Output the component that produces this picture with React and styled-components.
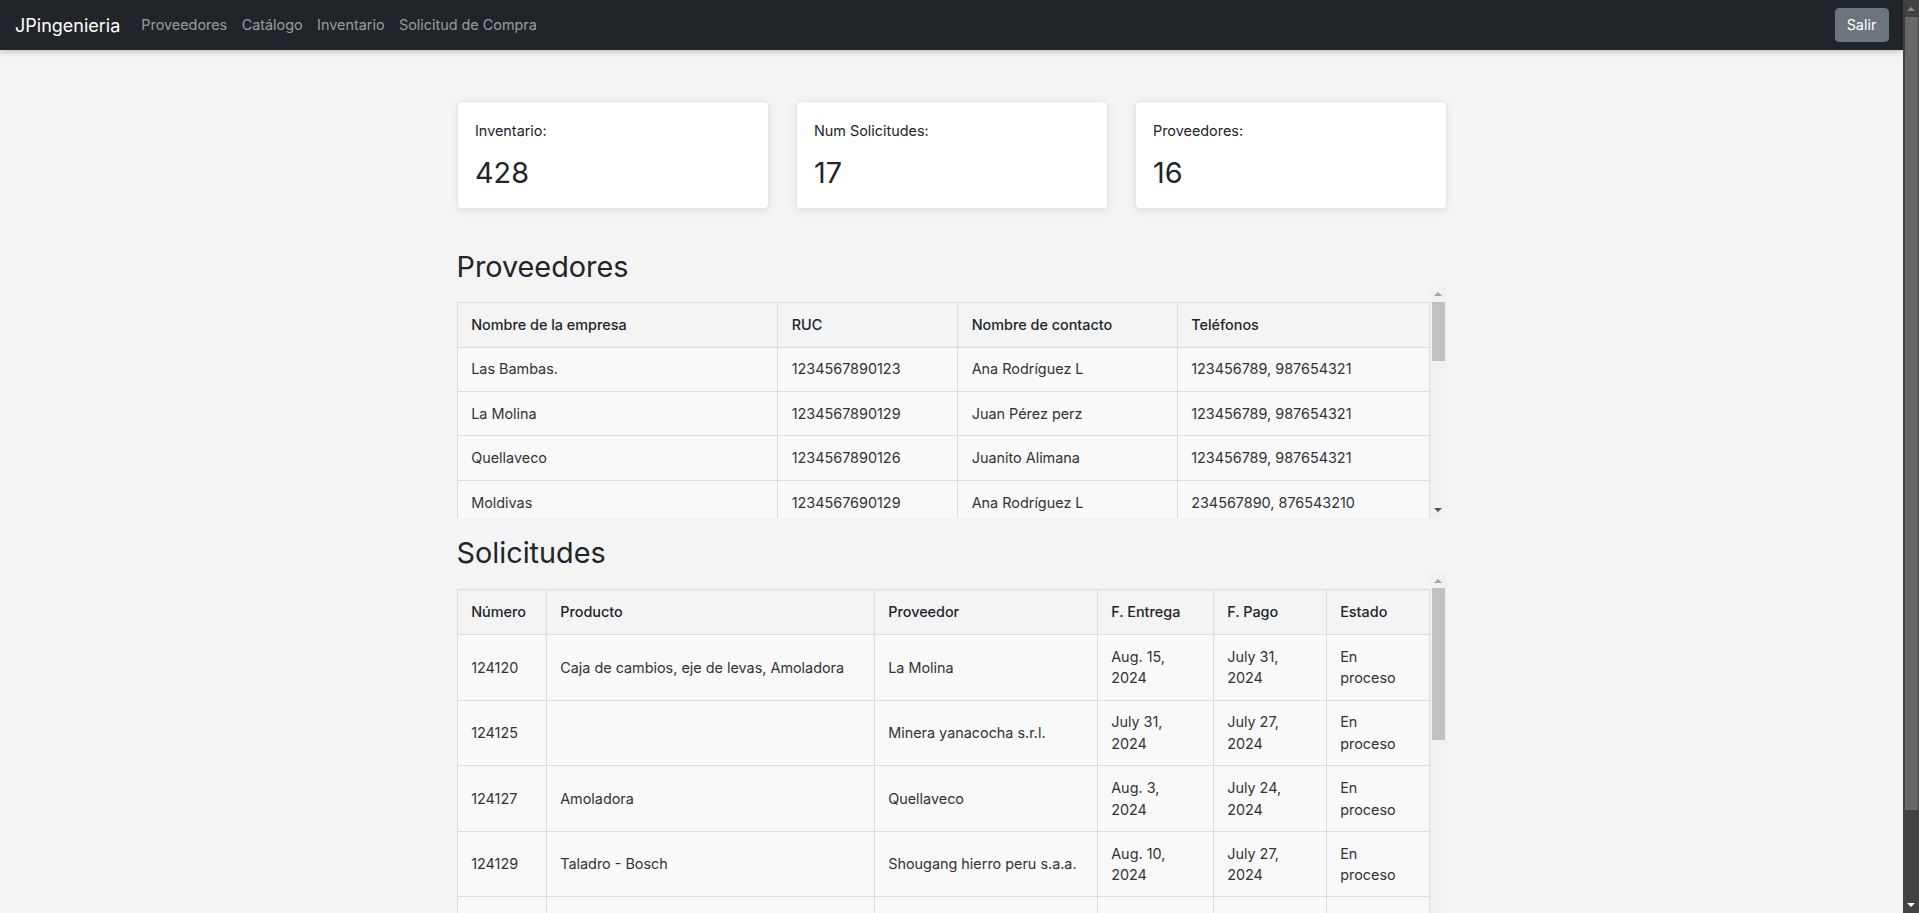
import React from "react";
import styled, { createGlobalStyle } from "styled-components";

const GlobalStyle = createGlobalStyle`
  body {
    margin: 0;
    background: #f4f4f4;
    color: #212529;
    font-family: Inter, "Noto Sans", sans-serif;
    font-size: 14.4px;
    line-height: 1.5;
  }
`;

const Shell = styled.div`
  display: flex;
  height: 100vh;
  overflow: hidden;
`;

const Page = styled.div`
  flex: 1;
  min-width: 0;
  display: flex;
  flex-direction: column;
`;

const Navbar = styled.nav`
  flex: none;
  display: flex;
  align-items: center;
  height: 50px;
  padding: 0 14.5px 0 15px;
  background: #212529;
  box-shadow: 0 2px 6px rgba(0, 0, 0, 0.2);
  position: relative;
`;

const Brand = styled.a`
  color: #fff;
  font-size: 18px;
  margin-right: 21px;
`;

const NavLinks = styled.div`
  display: flex;
  gap: 14.4px;
  flex: 1;
`;

const NavLink = styled.a`
  color: rgba(255, 255, 255, 0.55);
`;

const LogoutButton = styled.button`
  width: 54px;
  height: 34px;
  background: #6c757d;
  border: 1px solid #6c757d;
  border-radius: 4px;
  color: #fff;
  font: inherit;
  padding: 0;
`;

const Main = styled.main`
  flex: 1;
  min-height: 0;
  width: 990px;
  margin: 0 auto;
  padding-top: 51px;
  display: flex;
  flex-direction: column;
`;

const Cards = styled.section`
  flex: none;
  display: grid;
  grid-template-columns: repeat(3, 1fr);
  gap: 27px;
  margin-bottom: 41.2px;
`;

const Card = styled.div`
  height: 107.5px;
  box-sizing: border-box;
  padding: 18px 17.5px;
  background: #fff;
  border: 1px solid #e4e4e4;
  border-radius: 4px;
  box-shadow: 0 2px 8px rgba(0, 0, 0, 0.08);
`;

const CardLabel = styled.p`
  margin: 0 0 14.5px;
`;

const CardValue = styled.p`
  margin: 0;
  font-size: 28.8px;
  line-height: 34px;
`;

const Heading = styled.h2`
  flex: none;
  margin: 0 0 2.4px;
  font-size: 28.8px;
  font-weight: 400;
  line-height: 1.2;
`;

const Scroller = styled.div`
  display: flex;
  min-height: 0;
  flex: ${(p) => (p.$height ? `0 0 ${p.$height}px` : "1")};
  margin-bottom: ${(p) => p.$after || 0}px;
`;

const TableViewport = styled.div`
  flex: 1;
  min-width: 0;
  overflow: hidden;
  padding-top: ${(p) => p.$top}px;
`;

const Rail = styled.div`
  flex: none;
  width: ${(p) => (p.$dark ? 16 : 17)}px;
  display: flex;
  flex-direction: column;
  background: ${(p) => (p.$dark ? "#424242" : "#f1f1f1")};
`;

const RailButton = styled.div`
  flex: none;
  height: ${(p) => (p.$dark ? 17 : 15)}px;
  display: flex;
  align-items: center;
  justify-content: center;

  &::after {
    content: "";
    border-left: 4px solid transparent;
    border-right: 4px solid transparent;
    ${(p) => (p.$down ? "border-top" : "border-bottom")}: 4px solid ${(p) => p.$color};
  }
`;

const RailTrack = styled.div`
  flex: 1;
  min-height: 0;
`;

const RailThumb = styled.div`
  height: ${(p) => p.$height}px;
  margin: ${(p) => (p.$dark ? "0 1px 0 2px" : "0 2px")};
  background: ${(p) => (p.$dark ? "#686868" : "#c1c1c1")};
`;

const Table = styled.table`
  width: 100%;
  table-layout: fixed;
  border-collapse: collapse;
`;

const Th = styled.th`
  padding: 11.2px 13.7px;
  background: #f4f4f4;
  border: 1px solid #dddddd;
  font-weight: 500;
  text-align: left;
`;

const Td = styled.td`
  height: 22px;
  padding: 10.7px 13.7px;
  background: #f9f9f9;
  border: 1px solid #dddddd;
  color: #333;
`;

const providers = [
  ["Las Bambas.", "1234567890123", "Ana Rodríguez L", "123456789, 987654321"],
  ["La Molina", "1234567890129", "Juan Pérez perz", "123456789, 987654321"],
  ["Quellaveco", "1234567890126", "Juanito Alimana", "123456789, 987654321"],
  ["Moldivas", "1234567690129", "Ana Rodríguez L", "234567890, 876543210"],
];

const requests = [
  ["124120", "Caja de cambios, eje de levas, Amoladora", "La Molina", "Aug. 15, 2024", "July 31, 2024"],
  ["124125", "", "Minera yanacocha s.r.l.", "July 31, 2024", "July 27, 2024"],
  ["124127", "Amoladora", "Quellaveco", "Aug. 3, 2024", "July 24, 2024"],
  ["124129", "Taladro - Bosch", "Shougang hierro peru s.a.a.", "Aug. 10, 2024", "July 27, 2024"],
];

function ScrollRail({ thumb, down }) {
  return (
    <Rail>
      <RailButton $color="#a3a3a3" />
      <RailTrack>
        <RailThumb $height={thumb} />
      </RailTrack>
      {down && <RailButton $down $color="#505050" />}
    </Rail>
  );
}

export default function App() {
  return (
    <Shell>
      <GlobalStyle />
      <Page>
        <Navbar>
          <Brand>JPingenieria</Brand>
          <NavLinks>
            <NavLink>Proveedores</NavLink>
            <NavLink>Catálogo</NavLink>
            <NavLink>Inventario</NavLink>
            <NavLink>Solicitud de Compra</NavLink>
          </NavLinks>
          <LogoutButton>Salir</LogoutButton>
        </Navbar>
        <Main>
          <Cards>
            <Card>
              <CardLabel>Inventario:</CardLabel>
              <CardValue>428</CardValue>
            </Card>
            <Card>
              <CardLabel>Num Solicitudes:</CardLabel>
              <CardValue>17</CardValue>
            </Card>
            <Card>
              <CardLabel>Proveedores:</CardLabel>
              <CardValue>16</CardValue>
            </Card>
          </Cards>

          <Heading>Proveedores</Heading>
          <Scroller $height={231} $after={18.5}>
            <TableViewport $top={15}>
              <Table>
                <colgroup>
                  <col width="320.5" />
                  <col width="180" />
                  <col width="219.5" />
                  <col />
                </colgroup>
                <thead>
                  <tr>
                    <Th>Nombre de la empresa</Th>
                    <Th>RUC</Th>
                    <Th>Nombre de contacto</Th>
                    <Th>Teléfonos</Th>
                  </tr>
                </thead>
                <tbody>
                  {providers.map((row) => (
                    <tr key={row[1]}>
                      {row.map((cell, i) => (
                        <Td key={i}>{cell}</Td>
                      ))}
                    </tr>
                  ))}
                </tbody>
              </Table>
            </TableViewport>
            <ScrollRail thumb={59} down />
          </Scroller>

          <Heading>Solicitudes</Heading>
          <Scroller>
            <TableViewport $top={16}>
              <Table>
                <colgroup>
                  <col width="89" />
                  <col width="328" />
                  <col width="223" />
                  <col width="116" />
                  <col width="113" />
                  <col />
                </colgroup>
                <thead>
                  <tr>
                    <Th>Número</Th>
                    <Th>Producto</Th>
                    <Th>Proveedor</Th>
                    <Th>F. Entrega</Th>
                    <Th>F. Pago</Th>
                    <Th>Estado</Th>
                  </tr>
                </thead>
                <tbody>
                  {requests.map((row) => (
                    <tr key={row[0]}>
                      {row.map((cell, i) => (
                        <Td key={i}>{cell}</Td>
                      ))}
                      <Td>
                        En
                        <br />
                        proceso
                      </Td>
                    </tr>
                  ))}
                  <tr>
                    <Td />
                    <Td />
                    <Td />
                    <Td />
                    <Td />
                    <Td />
                  </tr>
                </tbody>
              </Table>
            </TableViewport>
            <ScrollRail thumb={152} />
          </Scroller>
        </Main>
      </Page>
      <Rail $dark>
        <RailButton $dark $color="#8a8a8a" />
        <RailTrack>
          <RailThumb $dark $height={793} />
        </RailTrack>
        <RailButton $dark $down $color="#ffffff" />
      </Rail>
    </Shell>
  );
}
